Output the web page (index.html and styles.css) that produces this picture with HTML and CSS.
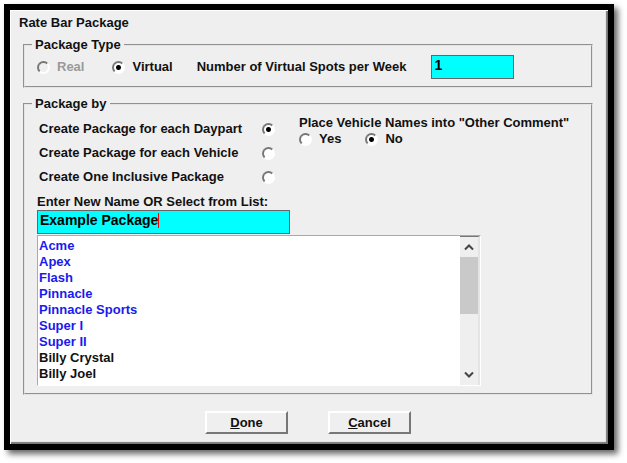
FILE: index.html
```html
<!DOCTYPE html>
<html lang="en">
<head>
<meta charset="utf-8">
<title>Rate Bar Package</title>
<link rel="stylesheet" href="styles.css">
</head>
<body>
<form class="dialog">
  <h1 class="title">Rate Bar Package</h1>
  <fieldset class="group">
    <legend>Package Type</legend>
    <div class="type-row">
      <label class="choice disabled"><input type="radio" name="type" disabled>Real</label>
      <label class="choice"><input type="radio" name="type" checked>Virtual</label>
      <label class="spots-label" for="spots">Number of Virtual Spots per Week</label>
      <input class="field spots" id="spots" type="text" value="1">
    </div>
  </fieldset>
  <fieldset class="group">
    <legend>Package by</legend>
    <div class="options">
      <div class="modes">
        <label class="mode">Create Package for each Daypart<input type="radio" name="mode" checked></label>
        <label class="mode">Create Package for each Vehicle<input type="radio" name="mode"></label>
        <label class="mode">Create One Inclusive Package<input type="radio" name="mode"></label>
      </div>
      <div class="comment" role="radiogroup" aria-labelledby="comment-label">
        <div id="comment-label">Place Vehicle Names into "Other Comment"</div>
        <div class="answers">
          <label class="choice"><input type="radio" name="comment">Yes</label>
          <label class="choice"><input type="radio" name="comment" checked>No</label>
        </div>
      </div>
    </div>
    <div class="picker">
      <label class="name-label" for="name">Enter New Name OR Select from List:</label>
      <div class="name-box">
        <input class="field" id="name" type="text" value="Example Package">
        <span class="caret"></span>
      </div>
      <div class="list">
        <select size="9" aria-label="Package names">
          <option class="saved">Acme</option>
          <option class="saved">Apex</option>
          <option class="saved">Flash</option>
          <option class="saved">Pinnacle</option>
          <option class="saved">Pinnacle Sports</option>
          <option class="saved">Super I</option>
          <option class="saved">Super II</option>
          <option>Billy Crystal</option>
          <option>Billy Joel</option>
        </select>
        <div class="scrollbar">
          <button type="button" class="arrow" aria-label="Scroll up"><svg width="10" height="8" viewBox="0 0 10 8"><path d="M1 6.5 5 2.5 9 6.5"/></svg></button>
          <div class="track"><div class="thumb"></div></div>
          <button type="button" class="arrow" aria-label="Scroll down"><svg width="10" height="8" viewBox="0 0 10 8"><path d="M1 1.5 5 5.5 9 1.5"/></svg></button>
        </div>
      </div>
    </div>
  </fieldset>
  <div class="actions">
    <button type="button" class="push"><u>D</u>one</button>
    <button type="button" class="push"><u>C</u>ancel</button>
  </div>
</form>
</body>
</html>
```
FILE: styles.css
```css
* {
  box-sizing: border-box;
}

body {
  margin: 0;
  padding: 4px 13px 12px 4px;
  background: #fff;
  color: #111;
  font: bold 13px/16px "Liberation Sans", Arial, sans-serif;
}

.dialog {
  padding: 5px 15px 10px 13px;
  border: 6px solid #000;
  background: #efefef;
  box-shadow: inset 1px 1px #fff, inset -2px -2px 1px #777, 4px 4px 6px rgba(0, 0, 0, 0.6);
}

.title {
  margin: 0 0 6px -4px;
  font-size: 13px;
  line-height: 16px;
}

.group {
  min-width: 0;
  margin: 0 0 8px;
  padding: 0 12px 7px;
  border: 2px groove #e4e4e4;
}

legend {
  margin-left: -5px;
  padding: 0 3px;
}

input[type="radio"] {
  appearance: none;
  flex: none;
  width: 13px;
  height: 13px;
  margin: 0;
  border: 2px solid;
  border-color: #777 #fff #fff #777;
  border-radius: 50%;
  background: #fff;
}

input[type="radio"]:checked {
  background: radial-gradient(circle, #000 2px, #fff 3px);
}

input[type="radio"]:disabled {
  background: #efefef;
}

.choice {
  display: flex;
  align-items: center;
  gap: 7px;
}

.disabled {
  color: #999;
}

.type-row {
  display: flex;
  align-items: center;
  padding-top: 2px;
}

.type-row .choice + .choice {
  margin-left: 28px;
}

.spots-label {
  margin-left: 24px;
}

.field {
  display: block;
  width: 100%;
  height: 24px;
  padding: 0 2px 4px;
  border: 1px solid #666;
  outline: 0;
  background: #00ffff;
  color: #000;
  font: inherit;
  font-size: 14px;
}

.spots {
  width: 83px;
  margin-left: 25px;
}

.options {
  display: flex;
  gap: 24px;
  padding-top: 3px;
}

.modes {
  width: 238px;
  padding: 2px 0 0 2px;
}

.mode {
  display: flex;
  align-items: center;
  justify-content: space-between;
  height: 24px;
}

.answers {
  display: flex;
  gap: 24px;
}

.picker {
  width: 444px;
}

.name-label {
  display: block;
  padding-top: 5px;
}

.name-box {
  position: relative;
  width: 253px;
}

.caret {
  position: absolute;
  left: 121px;
  top: 3px;
  width: 1px;
  height: 15px;
  background: #f00;
}

.list {
  display: flex;
  margin-top: 1px;
  border: 1px solid;
  border-color: #aaa #fff #fff #aaa;
  background: #fff;
}

select {
  flex: 1;
  height: 149px;
  padding: 2px 0 0;
  border: 0;
  outline: 0;
  overflow: hidden;
  scrollbar-width: none;
  background: #fff;
  color: #111;
  font: inherit;
}

option {
  height: 16px;
  min-height: 16px;
  padding: 0 1px;
  font: inherit;
}

.saved {
  color: #1a1aee;
}

.scrollbar {
  display: flex;
  flex-direction: column;
  width: 20px;
  border-top: 1px solid #777;
  border-right: 2px solid #e4e4e4;
  background: #efefef;
}

.arrow {
  display: flex;
  align-items: center;
  justify-content: center;
  height: 20px;
  padding: 0;
  border: 0;
  background: #efefef;
}

.arrow path {
  fill: none;
  stroke: #444;
  stroke-width: 2;
}

.track {
  flex: 1;
}

.thumb {
  height: 57px;
  background: #c9c9c9;
}

.actions {
  display: flex;
  justify-content: center;
  gap: 40px;
  padding-top: 8px;
}

.push {
  width: 83px;
  height: 23px;
  padding: 0;
  border: 2px solid;
  border-color: #fff #777 #777 #fff;
  background: #efefef;
  color: #111;
  font: inherit;
}
```
